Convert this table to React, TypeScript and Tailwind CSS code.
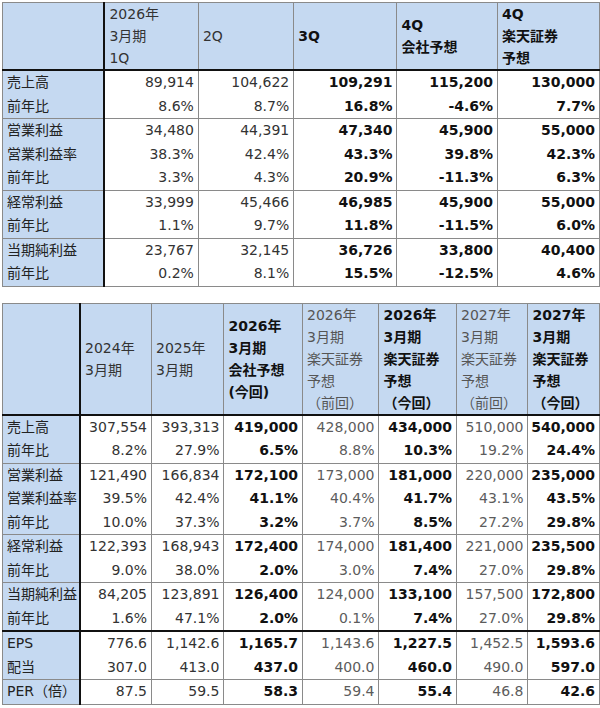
import React from 'react';

type Row = { label: string; values: string[]; groupStart?: boolean; thickTop?: boolean };

const font = { fontFamily: '"DejaVu Sans", "Noto Sans CJK JP", sans-serif' };

const quarterHead = [
  { lines: ['2026年', '3月期', '1Q'], bold: false },
  { lines: ['2Q'], bold: false },
  { lines: ['3Q'], bold: true },
  { lines: ['4Q', '会社予想'], bold: true },
  { lines: ['4Q', '楽天証券', '予想'], bold: true },
];

const quarterRows: Row[] = [
  { label: '売上高', values: ['89,914', '104,622', '109,291', '115,200', '130,000'] },
  { label: '前年比', values: ['8.6%', '8.7%', '16.8%', '-4.6%', '7.7%'] },
  { label: '営業利益', values: ['34,480', '44,391', '47,340', '45,900', '55,000'], groupStart: true },
  { label: '営業利益率', values: ['38.3%', '42.4%', '43.3%', '39.8%', '42.3%'] },
  { label: '前年比', values: ['3.3%', '4.3%', '20.9%', '-11.3%', '6.3%'] },
  { label: '経常利益', values: ['33,999', '45,466', '46,985', '45,900', '55,000'], groupStart: true },
  { label: '前年比', values: ['1.1%', '9.7%', '11.8%', '-11.5%', '6.0%'] },
  { label: '当期純利益', values: ['23,767', '32,145', '36,726', '33,800', '40,400'], groupStart: true },
  { label: '前年比', values: ['0.2%', '8.1%', '15.5%', '-12.5%', '4.6%'] },
];

const yearHead = [
  { lines: ['2024年', '3月期'], bold: false, gray: false },
  { lines: ['2025年', '3月期'], bold: false, gray: false },
  { lines: ['2026年', '3月期', '会社予想', '(今回)'], bold: true, gray: false },
  { lines: ['2026年', '3月期', '楽天証券', '予想', '（前回）'], bold: false, gray: true },
  { lines: ['2026年', '3月期', '楽天証券', '予想', '（今回）'], bold: true, gray: false },
  { lines: ['2027年', '3月期', '楽天証券', '予想', '（前回）'], bold: false, gray: true },
  { lines: ['2027年', '3月期', '楽天証券', '予想', '（今回）'], bold: true, gray: false },
];

const yearRows: Row[] = [
  { label: '売上高', values: ['307,554', '393,313', '419,000', '428,000', '434,000', '510,000', '540,000'] },
  { label: '前年比', values: ['8.2%', '27.9%', '6.5%', '8.8%', '10.3%', '19.2%', '24.4%'] },
  { label: '営業利益', values: ['121,490', '166,834', '172,100', '173,000', '181,000', '220,000', '235,000'], groupStart: true },
  { label: '営業利益率', values: ['39.5%', '42.4%', '41.1%', '40.4%', '41.7%', '43.1%', '43.5%'] },
  { label: '前年比', values: ['10.0%', '37.3%', '3.2%', '3.7%', '8.5%', '27.2%', '29.8%'] },
  { label: '経常利益', values: ['122,393', '168,943', '172,400', '174,000', '181,400', '221,000', '235,500'], groupStart: true },
  { label: '前年比', values: ['9.0%', '38.0%', '2.0%', '3.0%', '7.4%', '27.0%', '29.8%'] },
  { label: '当期純利益', values: ['84,205', '123,891', '126,400', '124,000', '133,100', '157,500', '172,800'], groupStart: true },
  { label: '前年比', values: ['1.6%', '47.1%', '2.0%', '0.1%', '7.4%', '27.0%', '29.8%'] },
  { label: 'EPS', values: ['776.6', '1,142.6', '1,165.7', '1,143.6', '1,227.5', '1,452.5', '1,593.6'], thickTop: true },
  { label: '配当', values: ['307.0', '413.0', '437.0', '400.0', '460.0', '490.0', '597.0'] },
  { label: 'PER（倍）', values: ['87.5', '59.5', '58.3', '59.4', '55.4', '46.8', '42.6'], groupStart: true },
];

function DataTable({
  widths,
  head,
  rows,
  boldCols,
  grayCols,
}: {
  widths: number[];
  head: { lines: string[]; bold: boolean; gray?: boolean }[];
  rows: Row[];
  boldCols: number[];
  grayCols: number[];
}) {
  return (
    <table className="table-fixed border-collapse border border-[#8a8a8a] text-[14px]" style={font}>
      <colgroup>
        {widths.map((w, i) => (
          <col key={i} style={{ width: w }} />
        ))}
      </colgroup>
      <thead>
        <tr>
          <th className="bg-[#c5d9f1] border-r-2 border-b-2 border-r-[#111] border-b-[#111]" />
          {head.map((h, i) => (
            <th
              key={i}
              className={`bg-[#c5d9f1] border-l border-l-[#8a8a8a] border-b-2 border-b-[#111] px-1 text-left align-middle leading-[22px] ${
                h.bold ? 'font-bold text-[#111]' : h.gray ? 'font-normal text-[#555]' : 'font-normal text-[#333]'
              }`}
            >
              {h.lines.map((l, j) => (
                <div key={j} className="whitespace-nowrap">
                  {l}
                </div>
              ))}
            </th>
          ))}
        </tr>
      </thead>
      <tbody>
        {rows.map((r, ri) => {
          const top = r.thickTop
            ? 'border-t-2 border-t-[#111]'
            : r.groupStart
              ? 'border-t border-t-[#8a8a8a]'
              : '';
          return (
            <tr key={ri} className="h-[23.5px]">
              <td className={`bg-[#c5d9f1] border-r-2 border-r-[#111] pl-1 leading-[23.5px] whitespace-nowrap text-[#222] ${top}`}>
                {r.label}
              </td>
              {r.values.map((v, ci) => (
                <td
                  key={ci}
                  className={`border-l border-l-[#8a8a8a] pr-1 text-right leading-[23.5px] whitespace-nowrap ${top} ${
                    boldCols.includes(ci)
                      ? 'font-bold text-[#111]'
                      : grayCols.includes(ci)
                        ? 'text-[#5c5c5c]'
                        : 'text-[#333]'
                  }`}
                >
                  {v}
                </td>
              ))}
            </tr>
          );
        })}
      </tbody>
    </table>
  );
}

export default function App() {
  return (
    <div className="w-[600px] h-[708px] bg-white pt-[2px] pl-[2px] flex flex-col gap-[16px] overflow-hidden">
      <DataTable
        widths={[77, 71, 72, 78, 76, 77]}
        head={quarterHead}
        rows={quarterRows}
        boldCols={[2, 3, 4]}
        grayCols={[]}
      />
      <DataTable
        widths={[77, 71, 72, 78, 76, 77, 71, 71]}
        head={yearHead}
        rows={yearRows}
        boldCols={[2, 4, 6]}
        grayCols={[3, 5]}
      />
    </div>
  );
}
